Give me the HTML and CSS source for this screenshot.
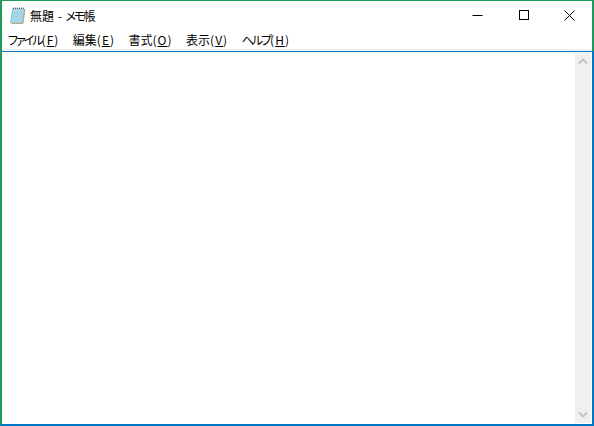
FILE: index.html
```html
<!DOCTYPE html>
<html lang="ja">
<head>
<meta charset="utf-8">
<title>無題 - メモ帳</title>
<link rel="stylesheet" href="styles.css">
</head>
<body>
<div class="window">
  <div class="chrome">
    <div class="titlebar">
      <svg class="app-icon" width="18" height="19" viewBox="0 0 18 19">
        <path d="M3.5 3 H15.5 L13.5 17 H1.5 Z" fill="#a8dcec" stroke="#86aebd" stroke-width="0.8"/>
        <path d="M3.2 6.5H14.2M2.9 8.5H13.9M2.6 10.5H13.6M2.3 12.5H13.3M2 14.5H13" stroke="#95cade" stroke-width="0.7"/>
        <path d="M4.5 3V1.6M6.5 3V1.6M8.5 3V1.6M10.5 3V1.6M12.5 3V1.6M14.5 3V1.6" stroke="#5c6468" stroke-width="1"/>
        <path d="M16 3.5L14 17.5H3" fill="none" stroke="#b9a77f" stroke-width="1"/>
      </svg>
      <span class="title">無題 - <span class="kana">メモ</span>帳</span>
      <div class="controls">
        <div class="ctrl"><svg width="11" height="11" viewBox="0 0 11 11"><path d="M0.5 5.5H10.5" stroke="#000"/></svg></div>
        <div class="ctrl"><svg width="11" height="11" viewBox="0 0 11 11"><rect x="1.5" y="0.5" width="9" height="9" fill="none" stroke="#000"/></svg></div>
        <div class="ctrl"><svg width="11" height="11" viewBox="0 0 11 11"><path d="M0.5 0.5L10.5 10.5M10.5 0.5L0.5 10.5" stroke="#000"/></svg></div>
      </div>
    </div>
    <div class="menubar">
      <span class="menu"><span class="kana">ファイル</span><span class="key">(<u>F</u>)</span></span>
      <span class="menu">編集<span class="key">(<u>E</u>)</span></span>
      <span class="menu">書式<span class="key">(<u>O</u>)</span></span>
      <span class="menu">表示<span class="key">(<u>V</u>)</span></span>
      <span class="menu"><span class="kana">ヘルプ</span><span class="key">(<u>H</u>)</span></span>
    </div>
  </div>
  <div class="content">
    <div class="editor"></div>
    <div class="scrollbar">
      <svg width="16" height="17" viewBox="0 0 16 17"><path d="M4 10.5L8 6.5L12 10.5" fill="none" stroke="#c4c4c4" stroke-width="2"/></svg>
      <svg width="16" height="17" viewBox="0 0 16 17"><path d="M4 6.5L8 10.5L12 6.5" fill="none" stroke="#c4c4c4" stroke-width="2"/></svg>
    </div>
  </div>
</div>
</body>
</html>
```

FILE: styles.css
```css
* { box-sizing: border-box; }
html, body { margin: 0; padding: 0; height: 100%; background: #fff; overflow: hidden; }
.window {
  width: 594px; height: 426px; display: flex; flex-direction: column;
  border-style: solid; border-width: 1px 0 2px 2px;
  border-color: #1d9a5c #0078c8 #0078c8 #1d9a5c;
  background: #fff;
  font-family: "Noto Sans CJK JP", "Liberation Sans", sans-serif;
  font-feature-settings: "palt";
  color: #000;
}
.chrome { flex: none; border-right: 2px solid #1d9a5c; }
.titlebar { height: 29px; display: flex; align-items: center; padding-left: 7px; }
.app-icon { flex: none; }
.title { font-size: 12px; margin-left: 3px; word-spacing: 1px; }
.kana { letter-spacing: -2px; }
.controls { margin-left: auto; display: flex; align-self: stretch; }
.ctrl { width: 46px; display: flex; align-items: center; justify-content: center; }
.menubar {
  height: 21px; display: flex; align-items: center; gap: 13.5px; padding-left: 6px;
  font-size: 12px; background: #fff; border-bottom: 2px solid #f0f0f0;
}
.menu { white-space: nowrap; }
.key { letter-spacing: 1px; }
.content { flex: 1; display: flex; min-height: 0; border-top: 1px solid #1a78c2; border-right: 2px solid #0078c8; }
.editor { flex: 1; background: #fff; }
.scrollbar {
  width: 16px; flex: none; background: #f0f0f0; margin: 1px 1px 1px 0;
  display: flex; flex-direction: column; justify-content: space-between;
}
.scrollbar svg { display: block; }
```
